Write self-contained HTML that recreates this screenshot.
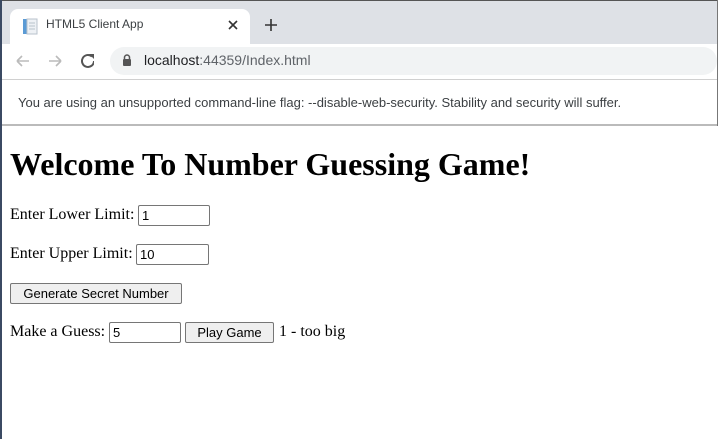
<!DOCTYPE html>
<html><head><style>
*{margin:0;padding:0;box-sizing:border-box}
body{width:718px;height:439px;overflow:hidden;background:#fff;position:relative;font-family:"Times New Roman","Liberation Serif",serif;}
.abs{position:absolute}
.ui{font-family:"Segoe UI","Liberation Sans","DejaVu Sans",sans-serif}
input{position:absolute;height:21px;border:1px solid #767676;border-radius:2px;font:13px "Liberation Sans",sans-serif;padding:0 3px;color:#000;background:#fff}
button{position:absolute;height:21px;border:1px solid #767676;border-radius:2px;background:#efefef;font:13px "Liberation Sans",sans-serif;color:#000}
.t{position:absolute;font-size:16px;color:#000;white-space:nowrap}
</style></head><body>
<div class="abs" style="left:0;top:0;width:718px;height:44px;background:#dee1e6;border-top:1px solid #555"></div>
<div class="abs" style="left:10px;top:9px;width:240px;height:36px;background:#fff;border-radius:8px 8px 0 0"></div>
<svg class="abs" style="left:22px;top:18px" width="16" height="18"><rect x="1" y="1" width="4" height="15" fill="#5b9bd5"/><rect x="5" y="1" width="10" height="15" fill="#eef1f5" stroke="#b8c2cc"/><path d="M7 5h6M7 8h6M7 11h6" stroke="#b8c2cc"/></svg>
<div class="abs ui" style="left:46px;top:17px;font-size:12px;color:#3c4043">HTML5 Client App</div>
<svg class="abs" style="left:228px;top:20px" width="10" height="10"><path d="M1 1L9 9M9 1L1 9" stroke="#333" stroke-width="1.6"/></svg>
<svg class="abs" style="left:265px;top:19px" width="12" height="12"><path d="M6 0V12M0 6H12" stroke="#333" stroke-width="1.6"/></svg>
<div class="abs" style="left:0;top:44px;width:718px;height:35px;background:#fff"></div>
<svg class="abs" style="left:14px;top:53px" width="80" height="16"><path d="M3 8H15M3 8L8 3M3 8L8 13" stroke="#bbb" stroke-width="1.6" fill="none"/><path d="M35 8H47M47 8L42 3M47 8L42 13" stroke="#bbb" stroke-width="1.6" fill="none"/><path d="M80 8A6 6 0 1 1 78 3.5" stroke="#555" stroke-width="2" fill="none"/><path d="M75 1L81 1L81 7Z" fill="#555"/></svg>
<div class="abs" style="left:110px;top:47px;width:607px;height:28px;background:#f1f3f4;border-radius:14px"></div>
<svg class="abs" style="left:122px;top:54px" width="10" height="12"><path d="M2.5 5V3.5a2.5 2.5 0 0 1 5 0V5" stroke="#555" stroke-width="1.5" fill="none"/><rect x="1" y="5" width="8" height="7" rx="1" fill="#555"/></svg>
<div class="abs ui" style="left:144px;top:52px;font-size:14px;color:#202124">localhost<span style="color:#5f6368">:44359/Index.html</span></div>
<div class="abs" style="left:0;top:79px;width:718px;height:1px;background:#d0d0d0"></div>
<div class="abs ui" style="left:18px;top:95px;font-size:13px;color:#3c4043">You are using an unsupported command-line flag: --disable-web-security. Stability and security will suffer.</div>
<div class="abs" style="left:0;top:124px;width:718px;height:2px;background:#bbb"></div>
<div class="abs" style="left:0;top:0;width:2px;height:439px;background:#3b4a63"></div>
<div class="abs" style="left:717px;top:0;width:1px;height:126px;background:#777"></div>
<div class="t" style="left:10px;top:146px;font-size:32px;font-weight:bold">Welcome To Number Guessing Game!</div>
<div class="t" style="left:10px;top:206px">Enter Lower Limit:</div>
<input style="left:138px;top:205px;width:72px" value="1">
<div class="t" style="left:10px;top:245px">Enter Upper Limit:</div>
<input style="left:136px;top:244px;width:73px" value="10">
<button style="left:10px;top:283px;width:172px">Generate Secret Number</button>
<div class="t" style="left:10px;top:323px">Make a Guess:</div>
<input style="left:109px;top:322px;width:72px" value="5">
<button style="left:185px;top:322px;width:89px">Play Game</button>
<div class="t" style="left:279px;top:323px">1 - too big</div>
</body></html>
